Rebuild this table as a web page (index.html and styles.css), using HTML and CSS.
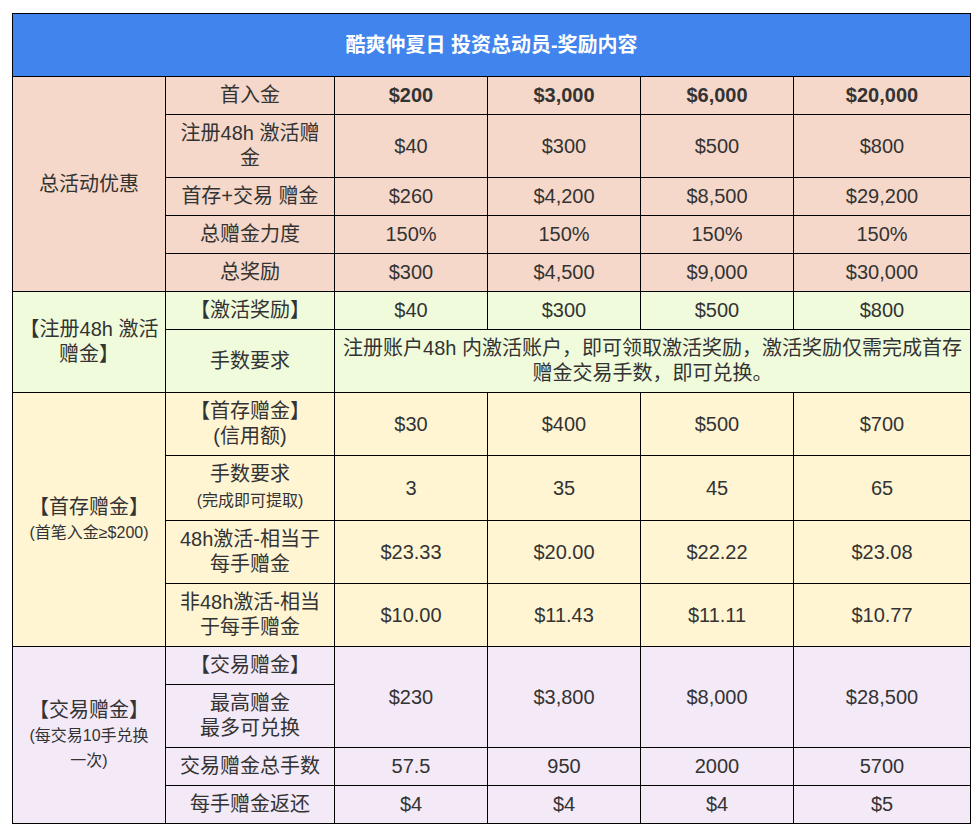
FILE: index.html
```html
<!DOCTYPE html>
<html lang="zh-CN">
<head>
<meta charset="utf-8">
<title>酷爽仲夏日 投资总动员-奖励内容</title>
<link rel="stylesheet" href="styles.css">
</head>
<body>
<table class="reward">
  <colgroup>
    <col class="c-group"><col class="c-label"><col class="c-val"><col class="c-val"><col class="c-val"><col class="c-last">
  </colgroup>
  <thead>
    <tr><th colspan="6" class="title">酷爽仲夏日 投资总动员-奖励内容</th></tr>
  </thead>
  <tbody class="sec-total">
    <tr>
      <td rowspan="5" class="group">总活动优惠</td>
      <td>首入金</td>
      <td class="bold">$200</td><td class="bold">$3,000</td><td class="bold">$6,000</td><td class="bold">$20,000</td>
    </tr>
    <tr><td>注册48h 激活赠金</td><td>$40</td><td>$300</td><td>$500</td><td>$800</td></tr>
    <tr><td>首存+交易 赠金</td><td>$260</td><td>$4,200</td><td>$8,500</td><td>$29,200</td></tr>
    <tr><td>总赠金力度</td><td>150%</td><td>150%</td><td>150%</td><td>150%</td></tr>
    <tr><td>总奖励</td><td>$300</td><td>$4,500</td><td>$9,000</td><td>$30,000</td></tr>
  </tbody>
  <tbody class="sec-reg">
    <tr>
      <td rowspan="2" class="group">【注册48h 激活<br>赠金】</td>
      <td>【激活奖励】</td><td>$40</td><td>$300</td><td>$500</td><td>$800</td>
    </tr>
    <tr>
      <td>手数要求</td>
      <td colspan="4">注册账户48h 内激活账户，即可领取激活奖励，激活奖励仅需完成首存赠金交易手数，即可兑换。</td>
    </tr>
  </tbody>
  <tbody class="sec-first">
    <tr>
      <td rowspan="4" class="group">【首存赠金】<span class="note">(首笔入金≥$200)</span></td>
      <td>【首存赠金】<br>(信用额)</td><td>$30</td><td>$400</td><td>$500</td><td>$700</td>
    </tr>
    <tr><td>手数要求<span class="note tall">(完成即可提取)</span></td><td>3</td><td>35</td><td>45</td><td>65</td></tr>
    <tr><td>48h激活-相当于每手赠金</td><td>$23.33</td><td>$20.00</td><td>$22.22</td><td>$23.08</td></tr>
    <tr><td>非48h激活-相当于每手赠金</td><td>$10.00</td><td>$11.43</td><td>$11.11</td><td>$10.77</td></tr>
  </tbody>
  <tbody class="sec-trade">
    <tr>
      <td rowspan="4" class="group">【交易赠金】<span class="note">(每交易10手兑换<br>一次)</span></td>
      <td>【交易赠金】</td>
      <td rowspan="2">$230</td><td rowspan="2">$3,800</td><td rowspan="2">$8,000</td><td rowspan="2">$28,500</td>
    </tr>
    <tr><td>最高赠金<br>最多可兑换</td></tr>
    <tr><td>交易赠金总手数</td><td>57.5</td><td>950</td><td>2000</td><td>5700</td></tr>
    <tr><td>每手赠金返还</td><td>$4</td><td>$4</td><td>$4</td><td>$5</td></tr>
  </tbody>
</table>
</body>
</html>
```

FILE: styles.css
```css
html, body {
  margin: 0;
  padding: 0;
  background: #ffffff;
}

body {
  padding: 13px 0 0 12px;
  font-family: "Liberation Sans", Arial, "Noto Sans CJK SC", sans-serif;
  color: #333333;
}

.reward {
  border-collapse: collapse;
  table-layout: fixed;
  width: 958px;
}

.c-group { width: 153px; }
.c-label { width: 169px; }
.c-val { width: 153px; }
.c-last { width: 177px; }

.reward th,
.reward td {
  border: 1px solid #000000;
  text-align: center;
  vertical-align: middle;
  font-size: 20px;
  line-height: 25px;
  padding: 6px 7px;
  font-weight: normal;
}

.reward td.group {
  padding-left: 3px;
  padding-right: 3px;
}

.reward th.title {
  background: #4184ee;
  color: #ffffff;
  font-weight: bold;
  height: 50px;
  padding: 6px 7px;
}

.reward td.bold {
  font-weight: bold;
}

.sec-total td { background: #f5d8c9; }
.sec-reg td { background: #f0fbdb; }
.sec-first td { background: #fff5d3; }
.sec-trade td { background: #f3e9f7; }

.note {
  display: block;
  font-size: 16px;
  line-height: 25px;
}

.note.tall {
  font-size: 16px;
  line-height: 27px;
}
```
